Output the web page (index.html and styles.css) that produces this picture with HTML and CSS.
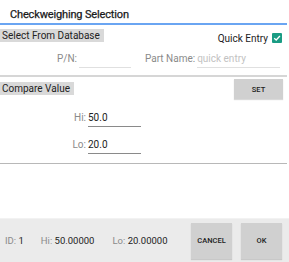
FILE: index.html
```html
<!DOCTYPE html>
<html lang="en">
<head>
    <meta charset="UTF-8">
    <meta name="viewport" content="width=device-width, initial-scale=1.0">
    <title>Checkweighing Selection</title>
    <link rel="stylesheet" href="styles.css">
</head>
<body>
    <div class="dialog">
        <div class="dialog-title">Checkweighing Selection</div>

        <div class="section-head">
            <span class="section-label">Select From Database</span>
            <label class="quick-entry">Quick Entry <span class="check"><svg width="8" height="8" viewBox="0 0 8 8"><path d="M1.2 4.2 L3.2 6 L6.9 2" fill="none" stroke="#fff" stroke-width="1.3"/></svg></span></label>
        </div>
        <div class="db-row">
            <span class="field-label pn-label">P/N:</span>
            <span class="field pn-field"></span>
            <span class="field-label name-label">Part Name:</span>
            <span class="field name-field hint">quick entry</span>
        </div>

        <div class="divider"></div>

        <div class="section-head compare-head">
            <span class="section-label">Compare Value</span>
            <button class="btn set-btn">SET</button>
        </div>
        <div class="limit-row hi-row">
            <span class="field-label limit-label">Hi:</span>
            <span class="field limit-field">50.0</span>
        </div>
        <div class="limit-row lo-row">
            <span class="field-label limit-label">Lo:</span>
            <span class="field limit-field">20.0</span>
        </div>

        <div class="divider bottom-divider"></div>

        <div class="footer">
            <span class="stat id-stat"><span class="muted">ID:</span> 1</span>
            <span class="stat hi-stat"><span class="muted">Hi:</span> 50.00000</span>
            <span class="stat lo-stat"><span class="muted">Lo:</span> 20.00000</span>
            <button class="btn footer-btn cancel-btn">CANCEL</button>
            <button class="btn footer-btn ok-btn">OK</button>
        </div>
    </div>
</body>
</html>
```

FILE: styles.css
```css
body {
    margin: 0;
    background-color: #ffffff;
    font-family: Roboto, "Liberation Sans", sans-serif;
    color: #222;
}
.dialog {
    width: 289px;
    height: 262px;
    display: flex;
    flex-direction: column;
}
.dialog-title {
    height: 23px;
    line-height: 29px;
    padding-left: 10px;
    font-size: 11px;
    letter-spacing: -0.15px;
    color: #1a1a1a;
    -webkit-text-stroke: 0.25px #1a1a1a;
    border-bottom: 2px solid #6aa5f2;
    margin-right: 2px;
}
.section-head {
    display: flex;
    align-items: center;
    justify-content: space-between;
    margin-top: 4px;
    height: 13px;
}
.section-label {
    background-color: #d9d9d9;
    font-size: 10px;
    line-height: 13px;
    padding: 0 4px 0 2px;
}
.quick-entry {
    display: flex;
    align-items: center;
    font-size: 10px;
    margin-top: 5px;
    margin-right: 7px;
    color: #222;
}
.check {
    display: inline-flex;
    align-items: center;
    justify-content: center;
    width: 10px;
    height: 10px;
    margin-left: 4px;
    background-color: #1a9c84;
    border-radius: 1px;
}
.db-row {
    display: flex;
    align-items: flex-end;
    margin-top: 11px;
    height: 15px;
}
.field-label {
    font-size: 10px;
    color: #8a8a8a;
    line-height: 12px;
}
.field {
    font-size: 10px;
    line-height: 12px;
    border-bottom: 1px solid #e0e0e0;
    padding-bottom: 2px;
}
.pn-label {
    margin-left: 57px;
    padding-bottom: 3px;
}
.pn-field {
    width: 52px;
    height: 12px;
    margin-left: 2px;
}
.name-label {
    margin-left: 14px;
    padding-bottom: 3px;
}
.name-field {
    width: 83px;
    margin-left: 2px;
}
.hint {
    color: #c2c2c2;
}
.divider {
    height: 2px;
    background-color: #d6d6d6;
    margin-top: 7px;
    margin-right: 2px;
}
.compare-head {
    height: 20px;
    margin-top: 2px;
    align-items: flex-start;
}
.compare-head .section-label {
    margin-top: 3px;
}
.btn {
    border: none;
    background-color: #d0d0d0;
    font-family: Roboto, "Liberation Sans", sans-serif;
    font-weight: 500;
    color: #222;
    padding: 0;
    box-shadow: 0 1px 1px rgba(0, 0, 0, 0.15);
}
.set-btn {
    width: 49px;
    height: 20px;
    margin-right: 6px;
    font-size: 7.5px;
}
.limit-row {
    display: flex;
    align-items: flex-end;
    padding-left: 70px;
}
.hi-row {
    margin-top: 13px;
}
.lo-row {
    margin-top: 12px;
}
.limit-label {
    width: 16px;
    margin-right: 2px;
    text-align: right;
    padding-bottom: 3px;
}
.limit-field {
    width: 53px;
    color: #222;
    border-bottom: 1px solid #8a8a8a;
    padding-bottom: 2px;
}
.bottom-divider {
    height: 1px;
    background-color: #b8b8b8;
    margin-top: 9px;
}
.footer {
    margin-top: auto;
    height: 43px;
    background-color: #ebebeb;
    border-top: 1px solid #f2f2f2;
    display: flex;
    align-items: center;
    font-size: 9.5px;
    color: #222;
}
.muted {
    color: #8a8a8a;
}
.id-stat {
    margin-left: 5px;
}
.hi-stat {
    margin-left: 17px;
}
.lo-stat {
    margin-left: 18px;
}
.footer-btn {
    width: 41px;
    height: 36px;
    font-size: 7.5px;
}
.cancel-btn {
    margin-left: auto;
}
.ok-btn {
    margin-left: 9px;
    margin-right: 7px;
}
```
